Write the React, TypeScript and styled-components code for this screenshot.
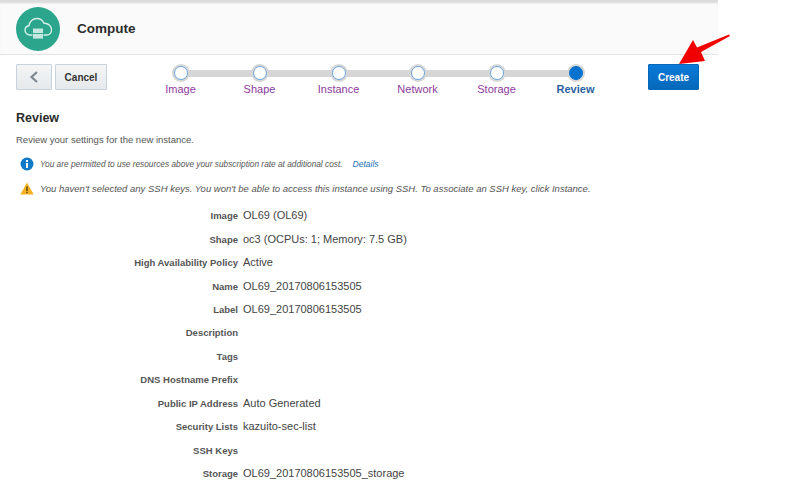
import styled, { createGlobalStyle } from 'styled-components'

const GlobalStyle = createGlobalStyle`
html, body {
    margin: 0;
    padding: 0;
    background: #fff;
}
body {
    font-family: "Liberation Sans", Arial, sans-serif;
    color: #333;
    overflow: hidden;
}
`

const Page = styled.div`
width: 800px;
height: 487px;
position: relative;
overflow: hidden;
`

const Header = styled.div`
width: 718px;
height: 53px;
box-sizing: border-box;
margin-top: 2px;
padding: 5px 0 0 16px;
display: flex;
gap: 17px;
background: #fafafa;
border-bottom: 1px solid #e4e4e4;
box-shadow: inset 0 2px 2px -1px #d8d8d8;
`

const TopLine = styled.div`
height: 2px;
width: 718px;
background: #dcdcdc;
margin-bottom: -2px;
`

const Logo = styled.div`
width: 44px;
height: 44px;
border-radius: 50%;
background: #2ca58d;
display: flex;
align-items: center;
justify-content: center;
`

const Title = styled.h1`
margin: 0;
font-size: 13.5px;
line-height: 44px;
font-weight: bold;
color: #2b2b2b;
`

const Toolbar = styled.div`
display: flex;
align-items: flex-start;
padding: 9px 0 0 16px;
height: 44px;
box-sizing: border-box;
`

const ToolButton = styled.button<{ $w: number }>`
width: ${p => p.$w}px;
height: 26px;
margin-right: 3px;
padding: 0;
display: flex;
align-items: center;
justify-content: center;
border: 1px solid #c9d2da;
border-radius: 1px;
background: linear-gradient(#f3f5f6, #e6e9ec);
font: bold 10px "Liberation Sans", Arial, sans-serif;
color: #333;
`

const Train = styled.div`
display: flex;
margin-left: 31px;
padding-top: 6px;
width: 474px;
`

const Step = styled.div<{ $current?: boolean }>`
width: 79px;
display: flex;
flex-direction: column;
align-items: center;
position: relative;
font-size: 11px;
line-height: 14px;
color: ${p => (p.$current ? '#2a5f9e' : '#8e3a9d')};
font-weight: ${p => (p.$current ? 'bold' : 'normal')};
&:not(:last-child)::after {
    content: '';
    position: absolute;
    left: 50%;
    top: 0;
    width: 79px;
    height: 7px;
    background: #d6d6d6;
}
`

const Stop = styled.div<{ $current?: boolean }>`
width: 12px;
height: 12px;
margin-top: -4px;
margin-bottom: 2px;
box-sizing: content-box;
border-radius: 50%;
position: relative;
z-index: 1;
border: 1px solid ${p => (p.$current ? '#0572ce' : '#6ba6e0')};
background: ${p => (p.$current ? '#0572ce' : '#fff')};
box-shadow: 0 0 0 2px #d6d6d6;
`

const CreateButton = styled.button`
width: 51px;
height: 26px;
margin-left: 33px;
padding: 0;
border: 1px solid #0568ba;
border-radius: 1px;
background: linear-gradient(#0a7ad8, #0568ba);
color: #fff;
font: bold 10px "Liberation Sans", Arial, sans-serif;
`

const Content = styled.div`
padding: 10px 0 0 16px;
`

const Heading = styled.h2`
margin: 0;
font-size: 12.5px;
line-height: 18px;
font-weight: bold;
color: #2b2b2b;
`

const Intro = styled.p`
margin: 6px 0 0;
font-size: 9.5px;
line-height: 14px;
color: #555;
`

const Messages = styled.div`
margin-top: 4px;
`

const Message = styled.div<{ $small?: boolean }>`
display: flex;
align-items: center;
gap: 6px;
height: 25px;
padding-left: 4px;
font-size: ${p => (p.$small ? '8.3px' : '9.5px')};
font-style: italic;
color: #555;
`

const DetailsLink = styled.a`
margin-left: 4px;
font-size: 8.5px;
color: #1a6fb5;
`

const Rows = styled.dl`
margin: 2.5px 0 0;
display: grid;
grid-template-columns: 222px 1fr;
grid-auto-rows: 23.45px;
column-gap: 5px;
align-items: center;
`

const Label = styled.dt`
padding-top: 1px;
text-align: right;
font-size: 9.5px;
font-weight: bold;
color: #555;
`

const Value = styled.dd`
margin: 0;
font-size: 11px;
color: #444;
`

const Arrow = styled.svg`
position: absolute;
left: 676px;
top: 33px;
`

const steps = ['Image', 'Shape', 'Instance', 'Network', 'Storage', 'Review']

const rows: [string, string][] = [
    ['Image', 'OL69 (OL69)'],
    ['Shape', 'oc3 (OCPUs: 1; Memory: 7.5 GB)'],
    ['High Availability Policy', 'Active'],
    ['Name', 'OL69_20170806153505'],
    ['Label', 'OL69_20170806153505'],
    ['Description', ''],
    ['Tags', ''],
    ['DNS Hostname Prefix', ''],
    ['Public IP Address', 'Auto Generated'],
    ['Security Lists', 'kazuito-sec-list'],
    ['SSH Keys', ''],
    ['Storage', 'OL69_20170806153505_storage'],
]

const App = () => {
    return (
        <Page>
            <GlobalStyle />
            <TopLine />
            <Header>
                <Logo>
                    <svg width="28" height="28" viewBox="0 0 28 28" fill="none">
                        <path d="M8 20H6C3 20 1 17.8 1 15.2c0-2.4 1.7-4.2 4-4.5C5.5 6.5 8.8 3.5 12.8 3.5c3.2 0 6 1.9 7.2 4.7 4.3-.2 7.5 2.8 7.5 6.6 0 2.8-2 5.2-5 5.2H20" stroke="#d5f0e9" strokeWidth="1.4" strokeLinecap="round" />
                        <rect x="9" y="13.5" width="10" height="4.6" fill="#c4e8df" />
                        <rect x="9" y="19" width="10" height="4.6" fill="#c4e8df" />
                    </svg>
                </Logo>
                <Title>Compute</Title>
            </Header>
            <Toolbar>
                <ToolButton $w={36} aria-label="Back">
                    <svg width="10" height="12" viewBox="0 0 10 12" fill="none">
                        <path d="M8 1 2.5 6 8 11" stroke="#7d8791" strokeWidth="2.2" />
                    </svg>
                </ToolButton>
                <ToolButton $w={52}>Cancel</ToolButton>
                <Train>
                    {steps.map((s, i) => (
                        <Step key={s} $current={i === 5}>
                            <Stop $current={i === 5} />
                            {s}
                        </Step>
                    ))}
                </Train>
                <CreateButton>Create</CreateButton>
            </Toolbar>
            <Content>
                <Heading>Review</Heading>
                <Intro>Review your settings for the new instance.</Intro>
                <Messages>
                    <Message $small>
                        <svg width="14" height="14" viewBox="0 0 14 14">
                            <circle cx="7" cy="7" r="6.5" fill="#0f7bc8" />
                            <rect x="6" y="6" width="2" height="5" fill="#fff" />
                            <rect x="6" y="3" width="2" height="2" fill="#fff" />
                        </svg>
                        <span>You are permitted to use resources above your subscription rate at additional cost.</span>
                        <DetailsLink>Details</DetailsLink>
                    </Message>
                    <Message>
                        <svg width="14" height="13" viewBox="0 0 14 13">
                            <path d="M7 .5 13.7 12.5H.3Z" fill="#f5b324" />
                            <rect x="6.3" y="4.5" width="1.4" height="4.5" fill="#5a4200" />
                            <rect x="6.3" y="9.8" width="1.4" height="1.4" fill="#5a4200" />
                        </svg>
                        <span>You haven't selected any SSH keys. You won't be able to access this instance using SSH. To associate an SSH key, click Instance.</span>
                    </Message>
                </Messages>
                <Rows>
                    {rows.map(([k, v]) => [
                        <Label key={k}>{k}</Label>,
                        <Value key={k + '-v'}>{v}</Value>,
                    ])}
                </Rows>
            </Content>
            <Arrow width="56" height="34" viewBox="0 0 56 34">
                <path d="M53 1.5 54 3 25 19 29 28 3 31 17 7 21 14.5Z" fill="#f00000" />
            </Arrow>
        </Page>
    )
}

export default App
